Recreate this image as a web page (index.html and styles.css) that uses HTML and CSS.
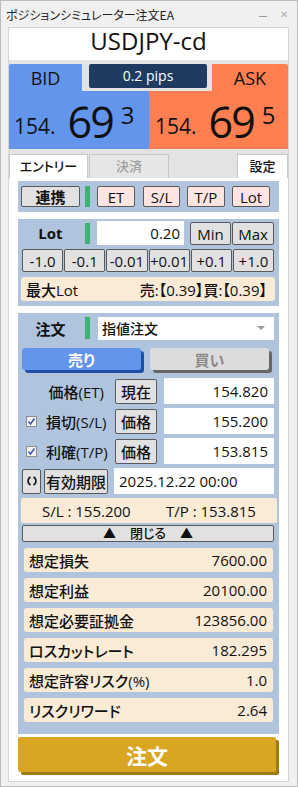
FILE: index.html
```html
<!DOCTYPE html>
<html lang="ja">
<head>
    <meta charset="UTF-8">
    <meta name="viewport" content="width=device-width, initial-scale=1.0">
    <title>ポジションシミュレーター注文EA</title>
    <link rel="stylesheet" href="styles.css">
</head>
<body>
<div class="window">
    <!-- title bar -->
    <div class="titlebar">
        <span class="title">ポジションシミュレーター注文EA</span>
        <span class="win-min"></span>
        <span class="win-close">✕</span>
    </div>

    <div class="panel">
        <div class="symbol">USDJPY-cd</div>

        <!-- bid / ask -->
        <div class="quotes">
            <div class="bid-head">BID</div>
            <div class="spread">0.2 pips</div>
            <div class="ask-head">ASK</div>
            <div class="price bid-price">
                <span class="p-small">154.</span><span class="p-big">69</span><span class="p-sup">3</span>
            </div>
            <div class="price ask-price">
                <span class="p-small">154.</span><span class="p-big">69</span><span class="p-sup">5</span>
            </div>
        </div>

        <div class="tabs">
            <div class="tab tab-entry">エントリー</div>
            <div class="tab tab-close">決済</div>
            <div class="tab tab-setting">設定</div>
        </div>

        <div class="content">
            <div class="box toolbar">
                <div class="btn btn-link">連携</div>
                <div class="green"></div>
                <div class="btn btn-pink btn-et">ET</div>
                <div class="btn btn-pink btn-sl">S/L</div>
                <div class="btn btn-pink btn-tp">T/P</div>
                <div class="btn btn-pink btn-lot">Lot</div>
            </div>

            <!-- lot -->
            <div class="box lot-box">
                <div class="row lot-row">
                    <div class="label">Lot</div>
                    <div class="green"></div>
                    <div class="field lot-field">0.20</div>
                    <div class="btn btn-min">Min</div>
                    <div class="btn btn-max">Max</div>
                </div>
                <div class="steps">
                    <div class="btn">-1.0</div>
                    <div class="btn">-0.1</div>
                    <div class="btn">-0.01</div>
                    <div class="btn">+0.01</div>
                    <div class="btn">+0.1</div>
                    <div class="btn">+1.0</div>
                </div>
                <div class="note">
                    <span>最大Lot</span>
                    <span>売:【0.39】買:【0.39】</span>
                </div>
            </div>

            <!-- order -->
            <div class="box order-box">
                <div class="row order-type">
                    <div class="label">注文</div>
                    <div class="green"></div>
                    <div class="select">指値注文<span class="arrow"></span></div>
                </div>
                <div class="row side-row">
                    <div class="side side-sell">売り</div>
                    <div class="side side-buy">買い</div>
                </div>
                <div class="row price-row">
                    <div class="row-label label-et">価格(ET)</div>
                    <div class="btn btn-small">現在</div>
                    <div class="field price-field">154.820</div>
                </div>
                <div class="row price-row">
                    <div class="row-label"><span class="check"><svg width="9" height="9" viewBox="0 0 9 9"><path d="M1.5 4.5 L3.5 7 L7.5 1.5" fill="none" stroke="#4257b2" stroke-width="1.6"/></svg></span>損切(S/L)</div>
                    <div class="btn btn-small">価格</div>
                    <div class="field price-field">155.200</div>
                </div>
                <div class="row price-row">
                    <div class="row-label"><span class="check"><svg width="9" height="9" viewBox="0 0 9 9"><path d="M1.5 4.5 L3.5 7 L7.5 1.5" fill="none" stroke="#4257b2" stroke-width="1.6"/></svg></span>利確(T/P)</div>
                    <div class="btn btn-small">価格</div>
                    <div class="field price-field">153.815</div>
                </div>
                <div class="row price-row">
                    <div class="btn btn-refresh">
                        <svg width="10" height="12" viewBox="0 0 10 12"><path d="M3.5 2 A4.5 4.5 0 0 0 3.5 10 M6.5 2 A4.5 4.5 0 0 1 6.5 10" fill="none" stroke="#111" stroke-width="1.6"/></svg>
                    </div>
                    <div class="btn btn-expiry">有効期限</div>
                    <div class="field expiry-field">2025.12.22 00:00</div>
                </div>
                <div class="sltp">
                    <span class="sl">S/L : 155.200</span>
                    <span>T/P : 153.815</span>
                </div>
                <div class="btn btn-fold"><span>▲</span><span class="fold-text">閉じる</span><span>▲</span></div>

                <div class="info">
                    <div class="info-row"><span>想定損失</span><span>7600.00</span></div>
                    <div class="info-row"><span>想定利益</span><span>20100.00</span></div>
                    <div class="info-row"><span>想定必要証拠金</span><span>123856.00</span></div>
                    <div class="info-row"><span>ロスカットレート</span><span>182.295</span></div>
                    <div class="info-row"><span>想定許容リスク(%)</span><span>1.0</span></div>
                    <div class="info-row"><span>リスクリワード</span><span>2.64</span></div>
                </div>
            </div>

            <div class="order-btn">注文</div>
        </div>
    </div>
</div>
</body>
</html>
```

FILE: styles.css
```css
* {
    box-sizing: border-box;
}

body {
    margin: 0;
    background-color: #f0f0f0;
    font-family: "Open Sans", "Noto Sans CJK JP", sans-serif;
    font-feature-settings: "palt";
    font-weight: 500;
    color: #111;
}

.window {
    width: 298px;
    height: 787px;
    border: 1px solid #bcbcbc;
    padding: 0 8px 4px 7px;
    background-color: #f0f0f0;
}

.titlebar {
    height: 26px;
    margin: 0 -8px 0 -7px;
    padding: 0 9px 0 5px;
    display: flex;
    align-items: center;
}

.title {
    font-family: "Noto Sans CJK JP", sans-serif;
    font-size: 12px;
    font-weight: 400;
    color: #222;
    flex: 1;
}

.win-min {
    width: 8px;
    height: 1px;
    background-color: #9a9a9a;
    margin-top: 4px;
}

.win-close {
    margin-left: 13px;
    font-size: 10px;
    color: #b0b0b0;
}

.panel {
    height: 755px;
    border: 1px solid #d5d5d5;
    background-color: #fff;
}

.symbol {
    height: 32px;
    font-size: 24px;
    line-height: 26px;
    text-align: center;
    background-color: #fff;
}

/* bid / ask block */
.quotes {
    display: grid;
    grid-template-columns: 73px 7px 60px 58px 5px 76px;
    grid-template-rows: 27px 58px;
    padding: 4px 0;
    background-color: #e3e3e3;
}

.bid-head,
.ask-head {
    grid-row: 1;
    font-size: 18px;
    line-height: 25px;
    padding-top: 2px;
    text-align: center;
}

.bid-head {
    grid-column: 1;
    background-color: #6495ed;
    border-top-left-radius: 2px;
}

.ask-head {
    grid-column: 6;
    background-color: #ff7f50;
    border-top-right-radius: 2px;
}

.spread {
    grid-column: 3 / 5;
    grid-row: 1;
    height: 24px;
    line-height: 23px;
    font-size: 14px;
    color: #fff;
    text-align: center;
    background-color: #203b62;
    border-radius: 2px;
}

.price {
    grid-row: 2;
    display: flex;
    align-items: flex-start;
    white-space: nowrap;
}

.bid-price {
    grid-column: 1 / 4;
    background-color: #6495ed;
    padding-left: 5px;
}

.ask-price {
    grid-column: 4 / 7;
    background-color: #ff7f50;
    padding-left: 6px;
}

.p-small {
    font-size: 21px;
    line-height: 21px;
    margin-top: 25px;
}

.p-big {
    font-size: 43px;
    line-height: 43px;
    letter-spacing: -2px;
    margin-top: 9px;
    margin-left: 12px;
}

.p-sup {
    font-size: 24px;
    line-height: 24px;
    margin-top: 12px;
    margin-left: 8px;
}

/* tabs */
.tabs {
    display: flex;
    height: 25px;
    padding-top: 1px;
    background-color: #e3e3e3;
}

.tab {
    height: 24px;
    border: 1px solid #c8c8c8;
    border-bottom: none;
    font-family: "Noto Sans CJK JP", sans-serif;
    font-size: 13px;
    line-height: 22px;
    text-align: center;
}

.tab-entry {
    width: 79px;
    background-color: #fff;
}

.tab-close {
    width: 80px;
    margin-left: 1px;
    background-color: #e6e6e6;
    color: #a0a0a0;
}

.tab-setting {
    width: 51px;
    margin-left: auto;
    background-color: #fff;
}

.content {
    padding: 3px 9px 0;
}

.box {
    background-color: #b0c4de;
}

.btn {
    height: 21px;
    display: flex;
    align-items: center;
    justify-content: center;
    border: 1px solid #5a5a5a;
    border-radius: 2px;
    background-color: #e1e1e1;
    font-size: 15px;
}

.green {
    width: 5px;
    height: 21px;
    margin-left: 5px;
    background-color: #3cb371;
}

.toolbar {
    height: 31px;
    display: flex;
    align-items: center;
    padding-left: 3px;
}

.btn-link {
    width: 59px;
    font-weight: bold;
}

.btn-pink {
    width: 38px;
    margin-left: 7px;
    background-color: #ffe4e1;
    font-size: 15px;
}

.btn-sl {
    width: 37px;
    margin-left: 8px;
}

/* lot */
.lot-box {
    margin-top: 7px;
    padding: 2px 4px 5px 3px;
}

.row {
    display: flex;
    align-items: center;
}

.lot-row {
    height: 24px;
}

.label {
    width: 59px;
    text-align: center;
    font-size: 15px;
    font-weight: bold;
}

.field {
    height: 24px;
    background-color: #fff;
    font-size: 15px;
    line-height: 24px;
}

.lot-field {
    width: 87px;
    margin-left: 7px;
    padding-right: 4px;
    text-align: right;
}

.btn-min,
.btn-max {
    height: 23px;
    margin-top: 1px;
}

.btn-min {
    width: 41px;
    margin-left: 6px;
}

.btn-max {
    width: 42px;
    margin-left: 1px;
}

.steps {
    display: grid;
    grid-template-columns: repeat(6, 1fr);
    gap: 1px;
    width: 252px;
    margin: 4px 0 0 1px;
}

.steps .btn {
    height: 23px;
}

.note,
.sltp,
.info-row {
    height: 24px;
    display: flex;
    align-items: center;
    background-color: #faebd7;
    border-radius: 3px;
    font-size: 15px;
}

.note {
    margin-top: 5px;
    justify-content: space-between;
    padding: 0 8px 0 5px;
}

/* order */
.order-box {
    margin-top: 7px;
    padding: 3px 2px 12px 3px;
}

.order-type {
    height: 24px;
}

.order-type .green {
    height: 22px;
}

.select {
    width: 176px;
    height: 23px;
    margin-left: 8px;
    padding: 0 9px 0 4px;
    display: flex;
    align-items: center;
    justify-content: space-between;
    background-color: #fff;
    font-size: 14px;
}

.arrow {
    border-left: 4px solid transparent;
    border-right: 4px solid transparent;
    border-top: 4px solid #9a9a9a;
}

.side-row {
    margin-top: 8px;
    height: 25px;
    align-items: flex-start;
}

.side {
    width: 119px;
    height: 22px;
    display: flex;
    align-items: center;
    justify-content: center;
    border-radius: 3px;
    font-size: 15px;
    font-weight: bold;
}

.side-sell {
    margin-left: 1px;
    background-color: #6495ed;
    color: #fff;
    box-shadow: 3px 3px 0 #1f4fa6;
}

.side-buy {
    margin-left: 9px;
    background-color: #dcdcdc;
    color: #8a8a8a;
    box-shadow: 3px 3px 0 #666;
}

.price-row {
    height: 26px;
    margin-top: 4px;
}

.side-row + .price-row {
    margin-top: 5px;
}

.row-label {
    width: 87px;
    display: flex;
    align-items: center;
    font-size: 15px;
}

.label-et {
    justify-content: flex-end;
    padding-right: 4px;
}

.check {
    width: 11px;
    height: 11px;
    margin: 0 9px 0 5px;
    display: flex;
    align-items: center;
    justify-content: center;
    border: 1px solid #8e8e8e;
    background-color: #f2f2f2;
}

.btn-small {
    width: 42px;
    height: 25px;
    margin-left: 7px;
}

.price-field {
    width: 110px;
    height: 26px;
    line-height: 26px;
    margin-left: 7px;
    padding-right: 6px;
    text-align: right;
}

.btn-refresh {
    width: 19px;
    height: 25px;
    margin-left: 1px;
}

.btn-expiry {
    width: 64px;
    height: 25px;
    margin-left: 3px;
}

.expiry-field {
    width: 160px;
    height: 26px;
    line-height: 26px;
    margin-left: 6px;
    padding-left: 5px;
}

.sltp {
    height: 25px;
    margin-top: 4px;
    padding-left: 21px;
    border-radius: 2px;
}

.sl {
    width: 124px;
}

.btn-fold {
    width: 252px;
    height: 17px;
    margin: 2px 0 0 1px;
    font-size: 13px;
    line-height: 15px;
}

.fold-text {
    margin: 0 14px;
}

.info {
    margin: 1px 4px 0 3px;
}

.info-row {
    margin-top: 6px;
    justify-content: space-between;
    padding: 0 6px 0 5px;
}

.order-btn {
    width: 258px;
    height: 35px;
    margin-top: 3px;
    display: flex;
    align-items: center;
    justify-content: center;
    background-color: #daa520;
    border-radius: 2px;
    box-shadow: 3px 3px 0 #a07a18;
    color: #fff;
    font-size: 21px;
    font-weight: bold;
}
```
